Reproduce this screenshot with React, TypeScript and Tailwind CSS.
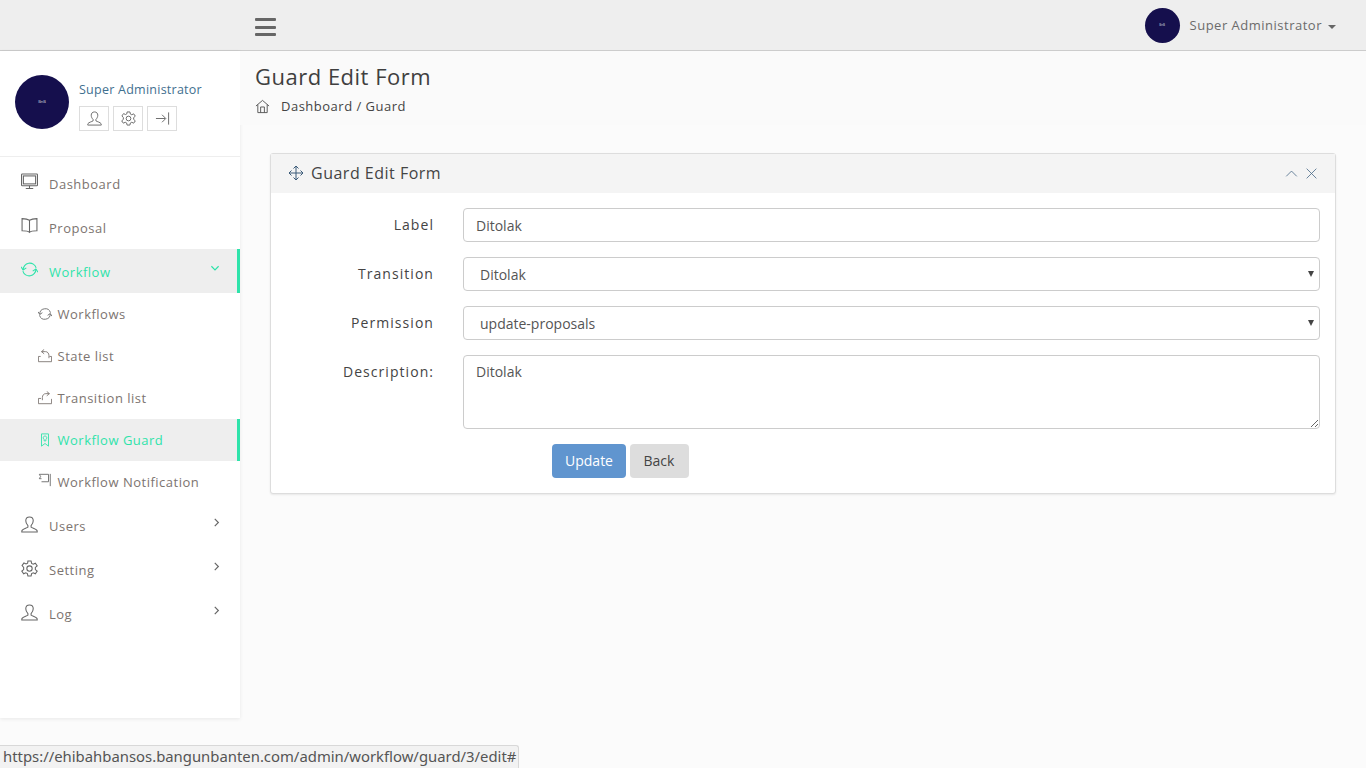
import React from 'react';

type IconProps = { className?: string };

const Svg = ({ className, children }: IconProps & { children: React.ReactNode }) => (
  <svg viewBox="0 0 32 32" fill="none" stroke="currentColor" strokeWidth="2" className={className}>
    {children}
  </svg>
);

const Monitor = (p: IconProps) => (
  <Svg {...p}>
    <rect x="1" y="2" width="30" height="22" rx="1.500" />
    <rect x="4.500" y="5.500" width="23" height="15" />
    <path d="M9 29h14M16 24v5" />
  </Svg>
);
const Book = (p: IconProps) => (
  <Svg {...p}>
    <path d="M16 6c-3-2-9-3-14-3v23c5 0 11 0 14 3 3-3 9-3 14-3V3c-5 0-11 1-14 3zM16 6v23" />
  </Svg>
);
const Refresh = (p: IconProps) => (
  <Svg {...p}>
    <path d="M4 17A12.500 12.500 0 0 1 28.500 13M28 15A12.500 12.500 0 0 1 3.500 19" />
    <path d="M0 11l4 6 6-4M32 21l-4-6-6 4" />
  </Svg>
);
const User = (p: IconProps) => (
  <Svg {...p}>
    <path d="M16 2c-4.500 0-7 3-7 7 0 4 2 7 4 9v3c-3 2-9 3-11 6-.5 1-.5 2-.5 3h29c0-1 0-2-.5-3-2-3-8-4-11-6v-3c2-2 4-5 4-9 0-4-2.500-7-7-7z" />
  </Svg>
);
const Gear = (p: IconProps) => (
  <Svg {...p}>
    <circle cx="16" cy="16" r="5" />
    <path d="M13 2h6l1 4.500 3 1.500 4-2 3.500 5-3.500 3v4l3.500 3-3.500 5-4-2-3 1.500-1 4.500h-6l-1-4.500-3-1.500-4 2-3.500-5 3.500-3v-4L2 10.500l3.500-5 4 2 3-1.500z" />
  </Svg>
);
const Home = (p: IconProps) => (
  <Svg {...p}>
    <path d="M2 15L16 3l14 12M6 12v17h20V12M12 29V17h8v12" />
  </Svg>
);
const Exit = (p: IconProps) => (
  <Svg {...p}>
    <path d="M2 16h20M15 8l8 8-8 8M29 3v26" />
  </Svg>
);
const BoxIn = (p: IconProps) => (
  <Svg {...p}>
    <path d="M6 17H1v12h30V17h-5M14 1L8 6l6 5M8 6h9c5 0 8 4 8 9v6" />
  </Svg>
);
const BoxOut = (p: IconProps) => (
  <Svg {...p}>
    <path d="M7 17H1v12h30V18M20 1l6 5-6 5M26 6h-8c-5 0-8 4-8 9v6" />
  </Svg>
);
const Bookmark = (p: IconProps) => (
  <Svg {...p}>
    <path d="M8 2h16v28l-8-6-8 6zM16 7c-3 0-4 2-4 4s1 3 2 4v3h4v-3c1-1 2-2 2-4s-1-4-4-4z" />
  </Svg>
);
const Flag = (p: IconProps) => (
  <Svg {...p}>
    <path d="M3 3h21v17H8M3 3l3 5-3 5h5M28 2v28" />
  </Svg>
);
const Move = (p: IconProps) => (
  <Svg {...p}>
    <path d="M16 2v28M2 16h28M11 7l5-5 5 5M11 25l5 5 5-5M7 11l-5 5 5 5M25 11l5 5-5 5" />
  </Svg>
);
const ChevronUp = (p: IconProps) => (
  <Svg {...p}>
    <path d="M3 23L16 10l13 13" />
  </Svg>
);
const Close = (p: IconProps) => (
  <Svg {...p}>
    <path d="M4 4l24 24M28 4L4 28" />
  </Svg>
);
const Chevron = ({ className }: IconProps) => (
  <svg viewBox="0 0 8 10" fill="none" stroke="currentColor" strokeWidth="1.300" className={className}>
    <path d="M1.500 1L5.500 5l-4 4" />
  </svg>
);

const mainItemCls = 'flex items-center h-[44px] pl-[21px] pr-[19px] text-[13px] tracking-[0.5px] text-[#7c7470]';
const subItemCls = 'flex items-center h-[42px] pl-[38px] text-[13px] tracking-[0.5px] text-[#7c7470]';

function Sidebar() {
  return (
    <aside className="w-[240px] h-[667px] shrink-0 bg-white shadow-[0_1px_4px_rgba(0,0,0,0.08)]">
      {/* Profil */}
      <div className="flex h-[106px] border-b border-[#eeeeee] pl-[15px] pt-[24px]">
        <div className="w-[54px] h-[54px] rounded-full bg-[#150f4d] flex items-center justify-center text-[4px] text-gray-300">
          BnB
        </div>
        <div className="ml-[10px] mt-[6px]">
          <div className="text-[12.500px] leading-[17px] tracking-[0.25px] text-[#3f6f8f]">Super Administrator</div>
          <div className="flex gap-[4px] mt-[8px]">
            <span className="w-[30px] h-[25px] border border-[#dddddd] flex items-center justify-center text-[#666]">
              <User className="w-[15px] h-[15px]" />
            </span>
            <span className="w-[30px] h-[25px] border border-[#dddddd] flex items-center justify-center text-[#666]">
              <Gear className="w-[15px] h-[15px]" />
            </span>
            <span className="w-[30px] h-[25px] border border-[#dddddd] flex items-center justify-center text-[#666]">
              <Exit className="w-[15px] h-[15px]" />
            </span>
          </div>
        </div>
      </div>

      {/* Menu */}
      <nav className="pt-[4px]">
        <a className={mainItemCls}>
          <Monitor className="w-[17px] h-[17px] mr-[11px] -mt-[3px] text-[#666]" />
          <span className="mt-[4px]">Dashboard</span>
        </a>
        <a className={mainItemCls}>
          <Book className="w-[17px] h-[17px] mr-[11px] -mt-[3px] text-[#666]" />
          <span className="mt-[4px]">Proposal</span>
        </a>
        <a className="flex items-center h-[44px] pl-[21px] pr-[19px] text-[13px] tracking-[0.5px] text-[#2ee3aa] bg-[#eeeeee] border-r-[3px] border-[#2ee3aa]">
          <Refresh className="w-[17px] h-[17px] mr-[11px] -mt-[3px]" />
          <span className="mt-[4px]">Workflow</span>
          <Chevron className="w-[8px] h-[9px] ml-auto -mr-[1px] -mt-[5px] rotate-90" />
        </a>
        <a className={subItemCls}>
          <Refresh className="w-[14px] h-[14px] mr-[5.500px] -mt-[1px] text-[#666]" />
          <span className="mt-[2px]">Workflows</span>
        </a>
        <a className={subItemCls}>
          <BoxIn className="w-[14px] h-[14px] mr-[5.500px] -mt-[1px] text-[#7c7470]" />
          <span className="mt-[2px]">State list</span>
        </a>
        <a className={subItemCls}>
          <BoxOut className="w-[14px] h-[14px] mr-[5.500px] -mt-[1px] text-[#7c7470]" />
          <span className="mt-[2px]">Transition list</span>
        </a>
        <a className="flex items-center h-[42px] pl-[38px] text-[13px] tracking-[0.5px] text-[#2ee3aa] bg-[#eeeeee] border-r-[3px] border-[#2ee3aa]">
          <Bookmark className="w-[14px] h-[14px] mr-[5.500px] -mt-[1px]" />
          <span className="mt-[2px]">Workflow Guard</span>
        </a>
        <a className={subItemCls}>
          <Flag className="w-[14px] h-[14px] mr-[5.500px] -mt-[4px] text-[#666]" />
          <span className="mt-[2px]">Workflow Notification</span>
        </a>
        <div className="h-px" />
        <a className={mainItemCls}>
          <User className="w-[17px] h-[17px] mr-[11px] -mt-[3px] text-[#666]" />
          <span className="mt-[2px]">Users</span>
          <Chevron className="w-[8px] h-[9px] ml-auto -mt-[7px] text-[#666]" />
        </a>
        <a className={mainItemCls}>
          <Gear className="w-[17px] h-[17px] mr-[11px] -mt-[3px] text-[#666]" />
          <span className="mt-[2px]">Setting</span>
          <Chevron className="w-[8px] h-[9px] ml-auto -mt-[7px] text-[#666]" />
        </a>
        <a className={mainItemCls}>
          <User className="w-[17px] h-[17px] mr-[11px] -mt-[3px] text-[#666]" />
          <span className="mt-[2px]">Log</span>
          <Chevron className="w-[8px] h-[9px] ml-auto -mt-[7px] text-[#666]" />
        </a>
      </nav>
    </aside>
  );
}

const labelCls = 'w-[163px] text-right text-[14px] tracking-[1.050px] leading-[34px] text-[#444444]';
const fieldCls =
  'w-[857px] h-[34px] ml-[29px] border border-[#cccccc] rounded-[4px] bg-white px-[12px] text-[14px] text-[#555555] outline-none';

function SelectField({ value }: { value: string }) {
  return (
    <div className="relative">
      <select className={fieldCls + ' appearance-none px-[16px] block'} defaultValue={value}>
        <option>{value}</option>
      </select>
      <span className="absolute right-[6px] top-[14px] border-x-[3px] border-x-transparent border-t-[6px] border-t-[#444444]" />
    </div>
  );
}

function GuardForm() {
  return (
    <div className="mx-[30px] mt-[28px] border border-[#dddddd] rounded-[3px] bg-white shadow-[0_1px_2px_rgba(0,0,0,0.08)] h-[341px]">
      <div className="flex items-center h-[39px] bg-[#f4f4f4] pl-[17px] pr-[17px]">
        <Move className="w-[16px] h-[16px] mr-[7px] -mt-[2px] text-[#3a5a78]" />
        <span className="text-[16px] tracking-[0.5px] text-[#444444] -mt-[2px]">Guard Edit Form</span>
        <ChevronUp className="w-[13px] h-[13px] ml-auto text-[#4a6a88]" />
        <Close className="w-[13px] h-[13px] ml-[7px] text-[#4a6a88]" />
      </div>
      <div className="pt-[15px]">
        <div className="flex items-start h-[49px]">
          <label className={labelCls}>Label</label>
          <input className={fieldCls} defaultValue="Ditolak" />
        </div>
        <div className="flex items-start h-[49px]">
          <label className={labelCls}>Transition</label>
          <SelectField value="Ditolak" />
        </div>
        <div className="flex items-start h-[49px]">
          <label className={labelCls}>Permission</label>
          <SelectField value="update-proposals" />
        </div>
        <div className="flex items-start h-[89px]">
          <label className={labelCls}>Description:</label>
          <textarea
            className="w-[857px] h-[74px] ml-[29px] border border-[#cccccc] rounded-[4px] bg-white px-[12px] py-[6px] text-[14px] leading-[20px] text-[#555555] outline-none"
            defaultValue="Ditolak"
          />
        </div>
        <div className="flex gap-[4px] pl-[281px]">
          <button className="h-[34px] w-[74px] pb-[2px] rounded-[4px] bg-[#6095cf] text-[14px] text-white">Update</button>
          <button className="h-[34px] w-[59px] pb-[2px] pr-[1px] rounded-[4px] bg-[#dddddd] text-[14px] text-[#444444]">Back</button>
        </div>
      </div>
    </div>
  );
}

export default function App() {
  return (
    <div className="relative h-[768px] overflow-hidden bg-[#fbfbfb] font-['Open_Sans',sans-serif]">
      {/* Topbar */}
      <header className="flex items-center h-[51px] bg-[#eeeeee] border-b border-[#cccccc]">
        <div className="ml-[255px] mt-[4px] flex flex-col gap-[4.500px] w-[21px]">
          <span className="h-[3px] bg-[#666666] rounded-[1px]" />
          <span className="h-[3px] bg-[#666666] rounded-[1px]" />
          <span className="h-[3px] bg-[#666666] rounded-[1px]" />
        </div>
        <div className="ml-auto mr-[30px] mt-[1px] flex items-center">
          <div className="w-[35px] h-[35px] rounded-full bg-[#150f4d] flex items-center justify-center text-[3px] text-gray-300">
            BnB
          </div>
          <span className="ml-[10px] text-[13px] tracking-[0.5px] text-[#6b6b6b]">Super Administrator</span>
          <span className="ml-[6px] mt-[2px] border-x-[4px] border-x-transparent border-t-[4px] border-t-[#666666]" />
        </div>
      </header>

      <div className="flex">
        <Sidebar />
        <main className="flex-1">
          <div className="h-[74px] pl-[15px] pt-[10px] bg-[#fafafa]">
            <h1 className="text-[22px] leading-[30px] tracking-[0.5px] text-[#3f3f3f]">Guard Edit Form</h1>
            <div className="flex items-center mt-[6px] text-[13px] tracking-[0.5px] text-[#444444]">
              <Home className="w-[15px] h-[15px] mr-[11px] text-[#555555]" />
              Dashboard / Guard
            </div>
          </div>
          <GuardForm />
        </main>
      </div>

      {/* Status bubble */}
      <div className="absolute left-0 bottom-0 h-[23px] w-[519px] bg-[#f2f2f2] border-t border-r border-[#d8d8d8] rounded-tr-[3px] pl-[3px] text-[14.870px] leading-[21px] text-[#555555] font-['Noto_Sans',sans-serif] whitespace-nowrap overflow-hidden">
        https://ehibahbansos.bangunbanten.com/admin/workflow/guard/3/edit#
      </div>
    </div>
  );
}
